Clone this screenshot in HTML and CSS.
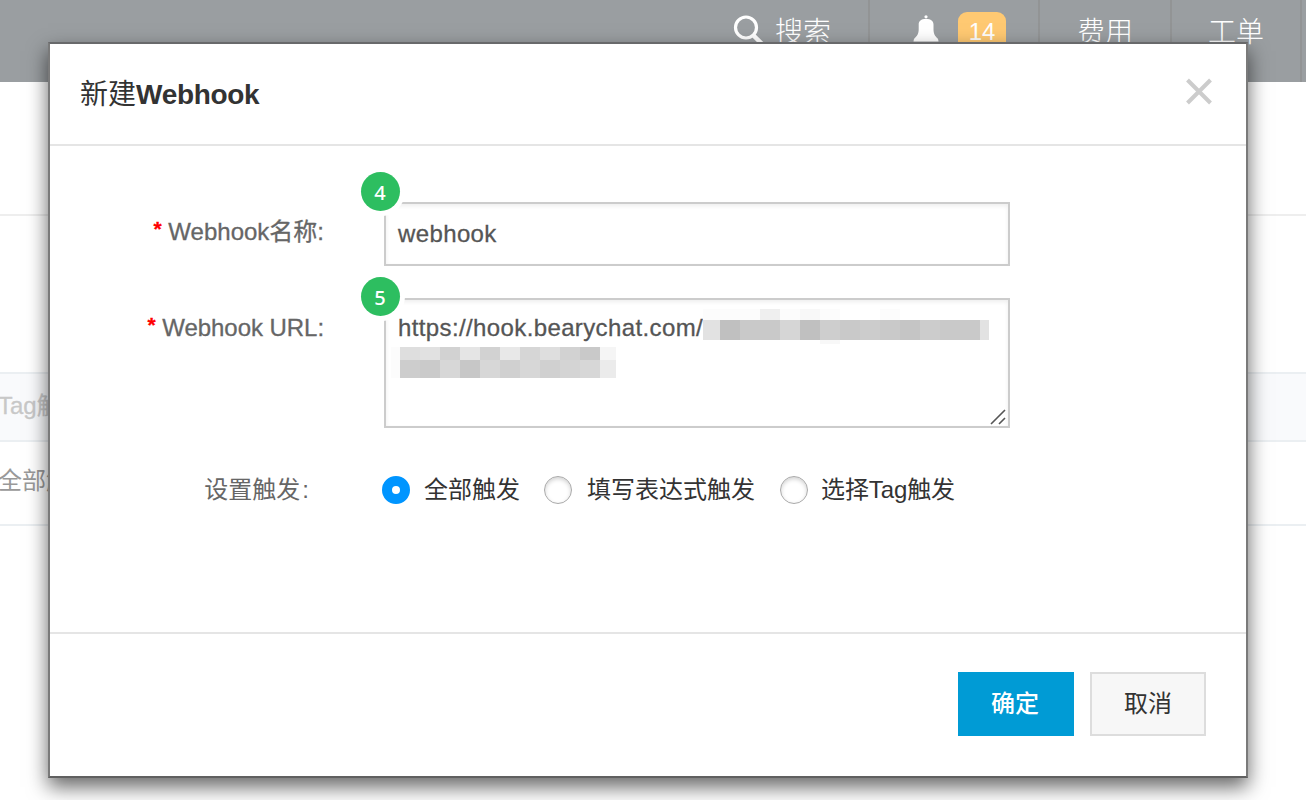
FILE: index.html
```html
<!DOCTYPE html>
<html lang="zh-CN">
<head>
<meta charset="utf-8">
<title>新建Webhook</title>
<link rel="stylesheet" href="styles.css">
</head>
<body>
<div class="page">
  <header class="topbar">
    <div class="nav search">
      <svg width="32" height="32" viewBox="0 0 32 32" fill="none" stroke="#fff"><circle cx="13" cy="12.500" r="10.500" stroke-width="3.200"/><path d="M20.500 20.500L31 31" stroke-width="4.500"/></svg>
      <span>搜索</span>
    </div>
    <div class="nav alerts">
      <svg width="26" height="32" viewBox="0 0 26 32" fill="#fff"><circle cx="13" cy="1.800" r="1.600"/><path d="M13 4C8 4 5.700 6 5.700 9.500V14C5.700 19 4 21 1.500 23.300Q.5 24.500.5 26.500H25.500Q25.500 24.500 24.500 23.300C22 21 20.500 19 20.500 14V9.500C20.500 6 18 4 13 4Z"/><path d="M11 28h4a2 2 0 0 1-4 0z"/></svg>
      <span class="count">14</span>
    </div>
    <div class="nav fee">费用</div>
    <div class="nav ticket">工单</div>
  </header>
  <div class="band band-title"></div>
  <div class="band band-tools"></div>
  <div class="band band-head"><span>Tag触发</span></div>
  <div class="band band-row"><span>全部触发</span></div>
</div>

<section class="modal">
  <header class="modal-head">
    <h1>新建<b>Webhook</b></h1>
    <svg class="close" width="28" height="28" viewBox="0 0 28 28" stroke="#ccc" stroke-width="4"><path d="M2.500 2L25.500 25M25.500 2L2.500 25"/></svg>
  </header>
  <div class="modal-body">
    <div class="field name">
      <label><i>*</i> Webhook名称:</label>
      <div class="box input">webhook</div>
      <span class="step">4</span>
    </div>
    <div class="field url">
      <label><i>*</i> Webhook URL:</label>
      <div class="box area">https://hook.bearychat.com/
        <svg class="mosaic" width="600" height="72" viewBox="390 308 600 72" shape-rendering="crispEdges">
          <path fill="#fcfcfc" d="M703 309h57v11h-57zM780 309h20v11h-20zM820 309h20v11h-20zM880 309h20v11h-20zM391 347h9v31h-9z"/>
          <path fill="#efefef" d="M760 309h20v11h-20z"/><path fill="#f8f8f8" d="M800 309h20v11h-20zM820 340h20v4h-20z"/>
          <path fill="#e2e2e2" d="M703 320h17v20h-17zM980 320h9v20h-9z"/>
          <path fill="#c9c9c9" d="M720 320h260v20h-260z"/>
          <path fill="#c0c0c0" d="M720 320h20v20h-20zM800 320h20v20h-20z"/>
          <path fill="#d6d6d6" d="M780 320h20v20h-20z"/><path fill="#cecece" d="M820 320h20v20h-20z"/>
          <path fill="#cccccc" d="M860 320h20v20h-20zM920 320h20v20h-20z"/><path fill="#c5c5c5" d="M900 320h20v20h-20z"/>
          <path fill="#dedede" d="M400 347h20v13h-20zM540 347h20v13h-20z"/><path fill="#e1e1e1" d="M420 347h20v13h-20z"/>
          <path fill="#d2d2d2" d="M440 347h20v13h-20zM480 347h20v13h-20zM560 347h20v13h-20z"/>
          <path fill="#e5e5e5" d="M460 347h20v13h-20z"/><path fill="#e8e8e8" d="M500 347h20v13h-20z"/>
          <path fill="#d6d6d6" d="M520 347h20v13h-20z"/><path fill="#c9c9c9" d="M580 347h20v13h-20z"/><path fill="#f5f5f5" d="M600 347h16v13h-16z"/>
          <path fill="#cdcdcd" d="M400 360h20v18h-20z"/><path fill="#cacaca" d="M420 360h20v18h-20z"/>
          <path fill="#d7d7d7" d="M440 360h20v18h-20zM480 360h20v18h-20zM520 360h20v18h-20zM580 360h20v18h-20z"/>
          <path fill="#c7c7c7" d="M460 360h20v18h-20z"/><path fill="#d0d0d0" d="M500 360h20v18h-20zM540 360h20v18h-20z"/>
          <path fill="#d4d4d4" d="M560 360h20v18h-20z"/><path fill="#ebebeb" d="M600 360h16v18h-16z"/>
        </svg>
        <svg class="grip" width="16" height="16" viewBox="0 0 16 16" stroke="#555" stroke-width="1.600"><path d="M1 15L15 1M9 15L15 9"/></svg>
      </div>
      <span class="step">5</span>
    </div>
    <div class="field trigger">
      <label>设置触发<span class="colon">:</span></label>
      <div class="options">
        <span class="radio on"></span><span class="opt all">全部触发</span>
        <span class="radio"></span><span class="opt expr">填写表达式触发</span>
        <span class="radio last"></span><span class="opt tag">选择Tag触发</span>
      </div>
    </div>
  </div>
  <footer class="modal-foot">
    <button class="btn primary">确定</button>
    <button class="btn">取消</button>
  </footer>
</section>
</body>
</html>
```
FILE: styles.css
```css
* { box-sizing: border-box; }
body {
  margin: 0;
  width: 1306px;
  height: 800px;
  overflow: hidden;
  position: relative;
  background: #fff;
  color: #333;
  font: 24px/36px "Liberation Sans", "Noto Sans CJK SC", sans-serif;
}
svg { display: block; flex: none; }

.topbar {
  height: 82px;
  background: #9a9ea1;
  display: flex;
  justify-content: flex-end;
  padding-right: 4px;
  color: #fff;
  font-size: 28px;
  font-weight: 300;
  line-height: 65px;
}
.nav { display: flex; border-right: 2px solid #929495; }
.search { width: 138px; padding-left: 1px; }
.search svg { margin: 15px 10px 0 0; }
.alerts { width: 170px; padding-left: 43px; }
.alerts svg { margin: 15px 19px 0 0; }
.count {
  width: 48px;
  height: 40px;
  margin-top: 12px;
  border-radius: 9px;
  background: #ffc972;
  font-size: 24px;
  font-weight: 400;
  font-family: "Liberation Sans", sans-serif;
  line-height: 40px;
  text-align: center;
}
.fee { width: 132px; padding-left: 37px; }
.ticket { width: 130px; padding-left: 36px; }

.band { border-bottom: 2px solid #ebeff2; white-space: nowrap; }
.band span { margin-left: -2px; }
.band-title { height: 134px; border-color: #eee; }
.band-tools { height: 158px; }
.band-head { height: 68px; background: #f9fafc; color: #c8c8c8; line-height: 64px; -webkit-text-stroke: .3px; }
.band-row { height: 84px; color: #999; line-height: 78px; }

.modal {
  position: absolute;
  left: 48px;
  top: 42px;
  width: 1200px;
  height: 736px;
  display: flex;
  flex-direction: column;
  border: 2px solid #7a7a7a;
  border-top-color: #68696b;
  border-bottom-color: #606060;
  background: #fff;
  box-shadow: 0 9px 19px rgba(0, 0, 0, .6);
}
.modal-head {
  height: 102px;
  border-bottom: 2px solid #e5e5e5;
  display: flex;
  justify-content: space-between;
  padding: 0 33px 0 30px;
}
h1 { margin: 0; font-size: 28px; font-weight: 400; line-height: 101px; }
h1 b { letter-spacing: -.3px; }
.close { margin-top: 34px; }

.modal-body { flex: 1; padding-top: 56px; }
.field { display: flex; position: relative; }
label {
  width: 274px;
  margin-right: 60px;
  text-align: right;
  color: #666;
  -webkit-text-stroke: .3px;
}
label i {
  color: #f00;
  font-size: 21px;
  font-style: normal;
  font-weight: 700;
  line-height: 1;
  vertical-align: 4px;
}
.name { height: 64px; margin-bottom: 32px; }
.name label { line-height: 59px; }
.url { height: 130px; margin-bottom: 38px; }
.url label { line-height: 59px; letter-spacing: -.05px; }
.box {
  position: relative;
  width: 626px;
  border: 2px solid #ccc;
  padding-left: 12px;
  color: #555;
  letter-spacing: .38px;
  -webkit-text-stroke: .3px;
  box-shadow: inset 0 2px 4px rgba(0, 0, 0, .07);
}
.input { line-height: 60px; }
.area { line-height: 56px; }
.mosaic { position: absolute; left: 4px; top: 8px; }
.grip { position: absolute; right: 2px; bottom: 1px; }
.step {
  position: absolute;
  left: 310.5px;
  top: -30.5px;
  width: 39px;
  height: 39px;
  border-radius: 50%;
  background: #2dbe60;
  box-shadow: 0 0 0 5px #fff;
  color: #fff;
  font: 500 20px/41px "Noto Sans", sans-serif;
  text-align: center;
}
.url .step { top: -21.5px; }

.trigger { height: 48px; line-height: 48px; }
.trigger label { width: 259px; margin-right: 73px; -webkit-text-stroke: 0; }
.colon { margin-left: 2px; }
.options { display: flex; align-items: flex-start; white-space: nowrap; }
.radio {
  width: 28px;
  height: 28px;
  margin: 10px 15px 0 0;
  border: 1px solid #aaa;
  border-radius: 50%;
  background: #fff;
  box-shadow: inset 0 2px 4px rgba(0, 0, 0, .18);
}
.radio.on {
  border: 10px solid #0095ff;
  margin-right: 14px;
  box-shadow: none;
}
.radio.last { margin-right: 13px; }
.all { width: 120px; }
.expr { width: 193px; }
.tag { letter-spacing: -.1px; }

.modal-foot {
  height: 144px;
  border-top: 2px solid #e5e5e5;
  display: flex;
  justify-content: flex-end;
  gap: 16px;
  padding: 38px 40px 0 0;
}
.btn {
  width: 116px;
  height: 64px;
  padding: 0;
  border: 2px solid #ddd;
  background: #f7f7f7;
  color: #333;
  font: inherit;
}
.btn.primary { padding-right: 2px; border-color: #009bd5; background: #009bd5; color: #fff; font-weight: 500; }
```
